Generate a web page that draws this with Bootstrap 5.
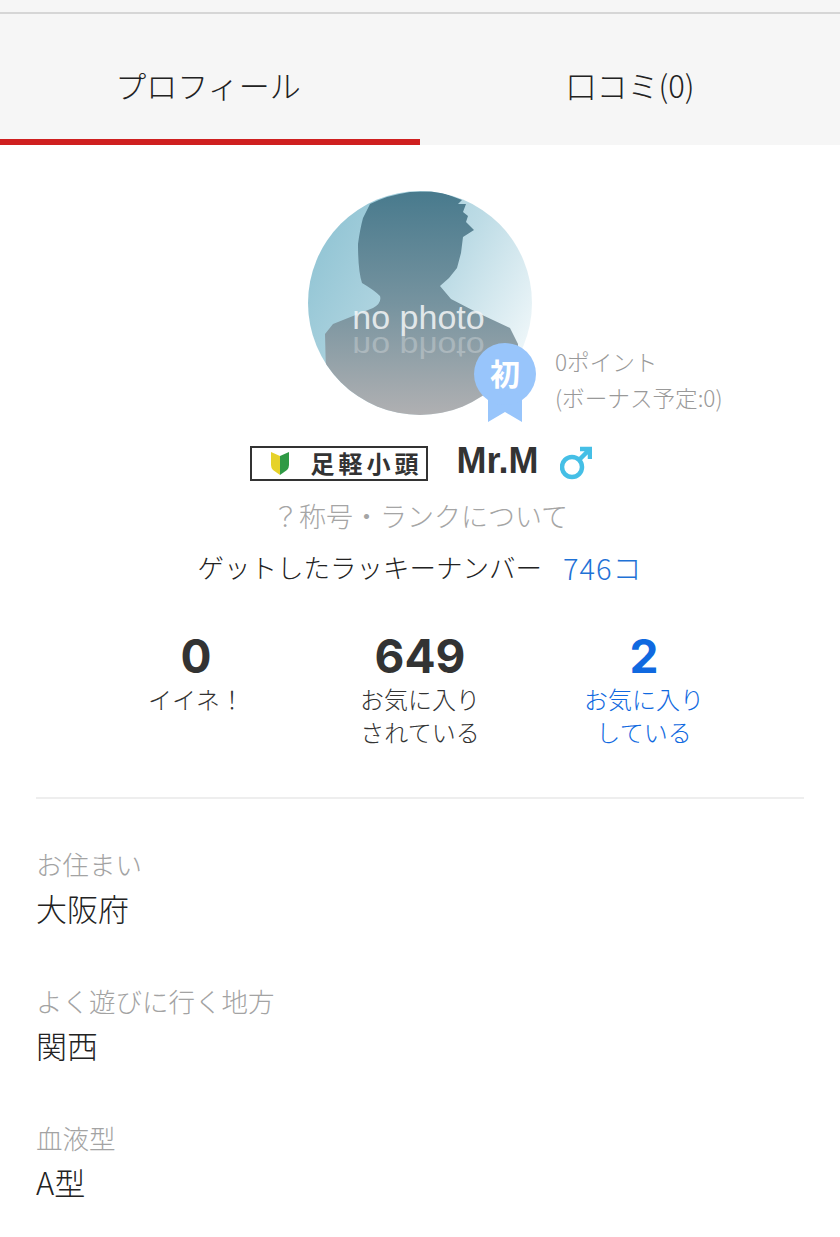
<!DOCTYPE html>
<html lang="ja">
<head>
<meta charset="utf-8">
<title>プロフィール</title>
<link href="https://cdn.jsdelivr.net/npm/bootstrap@5.3.0/dist/css/bootstrap.min.css" rel="stylesheet">
<style>
html,body{height:100%;}
body{font-family:"Noto Sans CJK JP","Noto Sans",sans-serif;background:#fff;color:#333;overflow:hidden;}
.top-strip{height:14px;background:#f6f6f6;border-bottom:2px solid #d6d6d6;}
.tab-bar{background:#f6f6f6;height:131px;}
.tab-item{flex:1 1 50%;height:131px;display:flex;align-items:center;justify-content:center;font-size:31px;font-weight:300;color:#222;line-height:1;padding-top:9px;text-decoration:none;}
.tab-item.on{border-bottom:6px solid #cf2020;padding-top:15px;padding-right:4px;}
.avatar-wrap{width:224px;height:240px;position:relative;margin:46px 0 0 308px;}
.avatar-svg{display:block;width:224px;height:224px;}
.rank-badge{position:absolute;left:165px;top:151px;width:64px;height:82px;}
.pts{position:absolute;left:247px;top:153px;width:220px;font-size:22.6px;line-height:36px;color:#999;font-weight:300;white-space:nowrap;}
.name-row{height:52px;margin-top:6px;gap:28px;padding-left:2px;}
.name-side{gap:21px;}
.rank-plate{width:178px;height:35px;border:2px solid #333;background:#fff;display:flex;align-items:center;padding-left:18px;gap:20px;font-size:24px;line-height:1;font-weight:700;color:#333;letter-spacing:4px;white-space:nowrap;}
.uname{font-family:"Liberation Sans",sans-serif;font-weight:700;font-size:36px;color:#333;line-height:1;margin-top:-4px;}
.rank-help{font-size:27px;color:#a5a5a5;font-weight:300;line-height:1;text-align:center;margin-top:13px;}
.lucky{font-size:26.5px;font-weight:300;color:#222;line-height:1;margin-top:24px;gap:21px;}
.lucky a{color:#1f72d6;text-decoration:none;font-size:29px;letter-spacing:1px;}
.stats{margin:0 36px;padding:48px 48px 49px;border-bottom:2px solid #eee;}
.stat-cell{text-align:center;font-size:24px;font-weight:300;line-height:33px;color:#333;text-decoration:none;}
.stat-num{font-family:"Inter",sans-serif;font-weight:700;font-size:46px;line-height:52px;color:#333;}
.stat-cell.linked,.stat-cell.linked .stat-num{color:#1069e0;}
.facts{padding:0 37px 0 36px;margin-top:52px;}
.fact{height:137px;}
.fact-label{font-size:26.5px;color:#a3a3a3;font-weight:300;line-height:1;}
.fact-value{font-size:31px;font-weight:300;color:#222;line-height:1;margin-top:14px;}
</style>
</head>
<body>
<div class="top-strip"></div>
<nav class="tab-bar d-flex">
  <a class="tab-item on" href="#">プロフィール</a>
  <a class="tab-item" href="#">口コミ(0)</a>
</nav>

<div class="avatar-wrap">
  <svg class="avatar-svg" viewBox="0 0 224 224" xmlns="http://www.w3.org/2000/svg">
    <defs>
      <linearGradient id="bg" x1="0" y1="0.2" x2="1" y2="0.75">
        <stop offset="0" stop-color="#8fc3d3"/>
        <stop offset="0.55" stop-color="#bcdbe5"/>
        <stop offset="1" stop-color="#f3f9fb"/>
      </linearGradient>
      <linearGradient id="fig" x1="0" y1="0" x2="0" y2="1">
        <stop offset="0" stop-color="#487a8d"/>
        <stop offset="0.5" stop-color="#76939f"/>
        <stop offset="1" stop-color="#b0b0b2"/>
      </linearGradient>
      <clipPath id="circ"><circle cx="112" cy="112" r="112"/></clipPath>
    </defs>
    <circle cx="112" cy="112" r="112" fill="url(#bg)"/>
    <g clip-path="url(#circ)">
      <path d="M62 13 Q80 4 102 1 L130 0 L154 9 L150 13 L158 13 L155 21 L160 25 L158 31 L166 39 L155 46 L153 62 L149 77 L141 87 L132 95 L143 108 L170 122 L202 137 L210 153 L212 224 L19 224 L17 143 L25 133 L65 117 Q74 112 72 105 Q66 99 54 92 Q50 80 50 53 Q52 38 55 27 Z" fill="url(#fig)"/>
    </g>
    <text x="110.500" y="138" text-anchor="middle" font-family="Liberation Sans, sans-serif" font-size="34" fill="#f4f6f7" fill-opacity=".85">no photo</text>
    <text transform="translate(0 263.300) scale(1 -.85)" x="110.500" y="138" text-anchor="middle" font-family="Liberation Sans, sans-serif" font-size="34" fill="#e4e6e7" fill-opacity=".35">no photo</text>
  </svg>
  <svg class="rank-badge" viewBox="0 0 64 82" xmlns="http://www.w3.org/2000/svg">
    <path d="M15 50 V80 L32 70 L49 80 V50 Z" fill="#98c5fb"/>
    <circle cx="32" cy="32" r="31" fill="#98c5fb"/>
    <text x="32" y="43" text-anchor="middle" font-family="Noto Sans CJK JP, sans-serif" font-weight="700" font-size="30" fill="#fff">初</text>
  </svg>
  <div class="pts">0ポイント<br>(ボーナス予定:0)</div>
</div>

<div class="name-row d-flex justify-content-center align-items-center">
  <div class="rank-plate">
    <svg width="20" height="26" viewBox="0 0 20 26" xmlns="http://www.w3.org/2000/svg"><path d="M1 2 L10 6 V25 L3 20 Q1 18 1 15 Z" fill="#e6d22a"/><path d="M19 2 L10 6 V25 L17 20 Q19 18 19 15 Z" fill="#2f9a45"/></svg>
    <span>足軽小頭</span>
  </div>
  <div class="name-side d-flex align-items-center">
    <span class="uname">Mr.M</span>
    <svg width="32" height="34" viewBox="0 0 32 34" xmlns="http://www.w3.org/2000/svg" fill="none" stroke="#45bfe6" stroke-width="4.5"><circle cx="12" cy="21" r="10"/><path d="M19 14 L30 3 M20 3 H30 V13"/></svg>
  </div>
</div>
<div class="rank-help">？称号・ランクについて</div>
<div class="lucky d-flex justify-content-center align-items-center">
  <span>ゲットしたラッキーナンバー</span><a href="#">746コ</a>
</div>

<div class="stats row g-0">
  <div class="col-4 stat-cell"><div class="stat-num">0</div>イイネ！</div>
  <div class="col-4 stat-cell"><div class="stat-num">649</div>お気に入り<br>されている</div>
  <a class="col-4 stat-cell linked" href="#"><div class="stat-num">2</div>お気に入り<br>している</a>
</div>

<div class="facts">
  <div class="fact"><div class="fact-label">お住まい</div><div class="fact-value">大阪府</div></div>
  <div class="fact"><div class="fact-label">よく遊びに行く地方</div><div class="fact-value">関西</div></div>
  <div class="fact"><div class="fact-label">血液型</div><div class="fact-value">A型</div></div>
</div>
</body>
</html>
